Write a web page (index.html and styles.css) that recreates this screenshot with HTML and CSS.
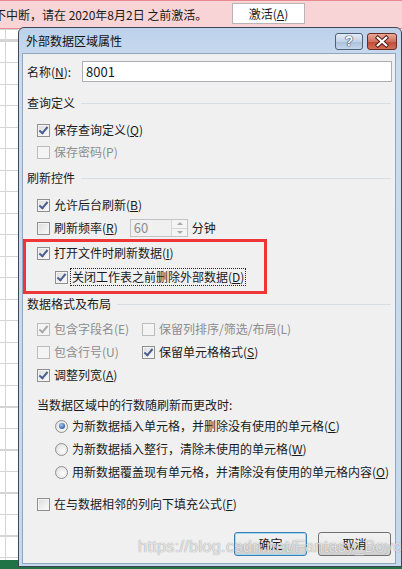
FILE: index.html
```html
<!DOCTYPE html>
<html lang="zh-CN">

<head>
    <meta charset="UTF-8">
    <title>外部数据区域属性</title>
    <link rel="stylesheet" href="styles.css">
</head>

<body>
    <!-- Activation notice -->
    <div class="notice">
        <span class="notice-text">不中断，请在 2020年8月2日 之前激活。</span>
        <span class="notice-btn">激活(<u>A</u>)</span>
    </div>

    <div class="desk">
        <div class="sheet"></div>

        <!-- Dialog -->
        <div class="dialog">
            <div class="titlebar">
                <span class="title">外部数据区域属性</span>
                <span class="tb-btn help">?</span>
                <span class="tb-btn close">
                    <svg viewBox="0 0 30 17" width="30" height="17">
                        <path d="M10.5 4.5 L19.5 12.5 M19.5 4.5 L10.5 12.5" stroke="#5a1a14" stroke-width="4.4" stroke-linecap="square"/>
                        <path d="M10.5 4.5 L19.5 12.5 M19.5 4.5 L10.5 12.5" stroke="#fff" stroke-width="2.4" stroke-linecap="square"/>
                    </svg>
                </span>
            </div>

            <div class="content">
                <div class="name-row">
                    <label class="name-label">名称(<u>N</u>):</label>
                    <div class="textbox">8001</div>
                </div>

                <div class="group g1"><span>查询定义</span></div>
                <div class="row r10"><span class="cb on"></span><span class="lbl">保存查询定义(<u>Q</u>)</span></div>
                <div class="row r4 off"><span class="cb"></span><span class="lbl">保存密码(P)</span></div>

                <div class="group g2"><span>刷新控件</span></div>
                <div class="row r10"><span class="cb on"></span><span class="lbl">允许后台刷新(<u>B</u>)</span></div>
                <div class="row r5">
                    <span class="cb"></span><span class="lbl">刷新频率(<u>R</u>)</span>
                    <div class="spin">
                        <span class="spin-val">60</span>
                        <span class="spin-btns"><i class="up"></i><i class="down"></i></span>
                    </div>
                    <span class="unit">分钟</span>
                </div>

                <div class="mark">
                    <div class="row"><span class="cb on"></span><span class="lbl">打开文件时刷新数据(<u>I</u>)</span></div>
                    <div class="row sub r6"><span class="cb on"></span><span class="lbl focus">关闭工作表之前删除外部数据(<u>D</u>)</span></div>
                </div>

                <div class="group g3"><span>数据格式及布局</span></div>
                <div class="row r8">
                    <div class="col off"><span class="cb on"></span><span class="lbl">包含字段名(E)</span></div>
                    <div class="col off"><span class="cb"></span><span class="lbl">保留列排序/筛选/布局(L)</span></div>
                </div>
                <div class="row r5">
                    <div class="col off"><span class="cb"></span><span class="lbl">包含行号(U)</span></div>
                    <div class="col"><span class="cb on"></span><span class="lbl">保留单元格格式(<u>S</u>)</span></div>
                </div>
                <div class="row r5"><span class="cb on"></span><span class="lbl">调整列宽(<u>A</u>)</span></div>

                <div class="note">当数据区域中的行数随刷新而更改时:</div>
                <div class="row sub r4"><span class="rd on"></span><span class="lbl">为新数据插入单元格，并删除没有使用的单元格(<u>C</u>)</span></div>
                <div class="row sub r5"><span class="rd"></span><span class="lbl">为新数据插入整行，清除未使用的单元格(<u>W</u>)</span></div>
                <div class="row sub r5"><span class="rd"></span><span class="lbl">用新数据覆盖现有单元格，并清除没有使用的单元格内容(<u>O</u>)</span></div>

                <div class="row r14"><span class="cb"></span><span class="lbl">在与数据相邻的列向下填充公式(<u>F</u>)</span></div>

                <div class="buttons">
                    <span class="btn default">确定</span>
                    <span class="btn">取消</span>
                </div>
            </div>
        </div>
    </div>

    <div class="watermark">https://blog.csdn.net/Fantasy_Boyce</div>
</body>

</html>
```

FILE: styles.css
```css
body {
    margin: 0;
    padding: 0;
    width: 402px;
    height: 569px;
    overflow: hidden;
    font-family: "Noto Sans CJK SC", "Microsoft YaHei", sans-serif;
    font-size: 12px;
    line-height: 16px;
    color: #1a1a1a;
    background: #fff;
}

u {
    text-decoration: underline;
    text-underline-offset: 1px;
}
/* Activation notice */

.notice {
    height: 27px;
    border-top: 1px solid #e68a8f;
    border-bottom: 1px solid #e68a8f;
    background: #f9d4d6;
    display: flex;
    align-items: center;
    overflow: hidden;
    white-space: nowrap;
}

.notice-text {
    margin-left: -6px;
    width: 238px;
    flex-shrink: 0;
}

.notice-btn {
    width: 71px;
    height: 19px;
    border: 1px solid #b9b3b4;
    background: #fff;
    text-align: center;
    line-height: 19px;
    margin-top: -3px;
}
/* Desk behind the dialog */

.desk {
    display: flex;
    height: 540px;
    background: linear-gradient(to bottom, #fff 530px, #217346 530px);
}

.sheet {
    width: 18px;
    flex-shrink: 0;
    background:
        linear-gradient(to bottom, transparent 530px, #217346 530px),
        linear-gradient(to right, transparent 5px, #d4d4d4 5px, #d4d4d4 6px, transparent 6px),
        repeating-linear-gradient(to bottom, #d4d4d4 0, #d4d4d4 1px, transparent 1px, transparent 21.5px) 0 11px / 100% 100%,
        #fff;
    border-top: 1px solid #d4d4d4;
    box-sizing: border-box;
}
/* Dialog */

.dialog {
    width: 384px;
    height: 540px;
    margin-top: -2px;
    box-sizing: border-box;
    border: 1px solid #3d4655;
    border-radius: 6px 6px 0 0;
    background: linear-gradient(to bottom, #bcd1ea, #cbdcf0 40px, #c6d8ee);
    padding: 0 5px 2px 3px;
    display: flex;
    flex-direction: column;
    flex-shrink: 0;
}

.titlebar {
    height: 25px;
    display: flex;
    align-items: center;
}

.title {
    flex: 1;
    padding-left: 4px;
    margin-top: 1px;
    color: #111;
}

.tb-btn {
    height: 15px;
    border: 1px solid #4e5f78;
    border-radius: 3px;
    margin-top: 1px;
    display: flex;
    align-items: center;
    justify-content: center;
}

.help {
    width: 26px;
    margin-right: 4px;
    background: linear-gradient(to bottom, #e4ecf6, #c2d2e6 50%, #aabfd9 51%, #c4d6ec);
    color: #fff;
    font-family: "Liberation Sans", sans-serif;
    font-weight: bold;
    font-size: 14px;
    text-shadow: 0 0 1px #1f3350, 0 0 1px #1f3350, 0 0 1px #1f3350;
}

.close {
    width: 28px;
    margin-right: -1px;
    background: linear-gradient(to bottom, #e9a99c, #d0715f 50%, #c04a32 51%, #d46f57);
    border-color: #6b2a20;
}

.content {
    flex: 1;
    border: 1px solid #93a6bf;
    background: #f0f0f0;
    padding: 7px 3px 0 4px;
}

.name-row {
    display: flex;
    align-items: center;
    height: 21px;
}

.name-label {
    width: 55px;
}

.textbox {
    flex: 1;
    height: 19px;
    border: 1px solid #abadb3;
    background: #fff;
    padding-left: 3px;
    font-size: 13px;
    line-height: 19px;
}
/* Group headers */

.group {
    height: 16px;
    display: flex;
    align-items: center;
    color: #1a1a1a;
}

.group::after {
    content: "";
    flex: 1;
    height: 1px;
    background: #d5dfe5;
    margin-left: 6px;
    margin-right: 1px;
}

.g1 { margin-top: 13px; }
.g2 { margin-top: 9px; }
.g3 { margin-top: 2px; }
/* Rows */

.row {
    height: 18px;
    display: flex;
    align-items: center;
    padding-left: 10px;
    white-space: nowrap;
}

.row.sub {
    padding-left: 28px;
}

.r4 { margin-top: 4px; }
.r5 { margin-top: 5px; }
.r6 { margin-top: 6px; }
.r8 { margin-top: 8px; }
.r10 { margin-top: 10px; }
.r14 { margin-top: 14px; }

.col {
    display: flex;
    align-items: center;
    width: 105px;
}

.lbl {
    margin-left: 4px;
}

.off .lbl {
    color: #8d8d8d;
}

.cb {
    width: 11px;
    height: 11px;
    border: 1px solid #8e8f8f;
    background: linear-gradient(135deg, #dcdcdc, #fbfbfb);
    box-shadow: inset 0 0 0 1px #f4f4f4;
    flex-shrink: 0;
    position: relative;
}

.cb.on::after {
    content: "";
    position: absolute;
    left: 3px;
    top: 0px;
    width: 3px;
    height: 7px;
    border-right: 2px solid #4a5f8f;
    border-bottom: 2px solid #4a5f8f;
    transform: rotate(40deg);
}

.off .cb {
    border-color: #bcbcbc;
    background: #f4f4f4;
}

.off .cb.on::after {
    border-color: #a9a9a9;
}

.rd {
    width: 11px;
    height: 11px;
    border: 1px solid #8e8f8f;
    border-radius: 50%;
    background: radial-gradient(circle at 60% 60%, #fdfdfd, #dadada);
    flex-shrink: 0;
    position: relative;
}

.rd.on::after {
    content: "";
    position: absolute;
    left: 2.5px;
    top: 2.5px;
    width: 6px;
    height: 6px;
    border-radius: 50%;
    background: radial-gradient(circle at 40% 35%, #a9c9f2, #2f5fa8 70%);
}

.focus {
    outline: 1px dotted #222;
    outline-offset: 0;
    padding: 0 1px;
    margin-left: 3px;
}
/* Refresh rate spinner */

.spin {
    margin-left: 12px;
    width: 56px;
    height: 16px;
    border: 1px solid #c3c3c3;
    background: #f0f0f0;
    display: flex;
    align-items: center;
}

.spin-val {
    flex: 1;
    padding-left: 3px;
    color: #8d8d8d;
    font-size: 13px;
}

.spin-btns {
    width: 15px;
    height: 16px;
    display: flex;
    flex-direction: column;
    border-left: 1px solid #d6d6d6;
}

.spin-btns i {
    flex: 1;
    position: relative;
    background: #f4f4f4;
}

.spin-btns i + i {
    border-top: 1px solid #d6d6d6;
}

.spin-btns i::after {
    content: "";
    position: absolute;
    left: 5px;
    top: 2px;
    border-left: 3px solid transparent;
    border-right: 3px solid transparent;
}

.spin-btns .up::after {
    border-bottom: 3px solid #a8a8a8;
}

.spin-btns .down::after {
    border-top: 3px solid #a8a8a8;
}

.unit {
    margin-left: 4px;
    color: #1a1a1a;
}
/* Red annotation box */

.mark {
    margin: 2px 0 0 -4px;
    width: 244px;
    padding: 5px 0 8px 4px;
    box-sizing: border-box;
    box-shadow: inset 0 0 0 3px #ee3537;
}

.note {
    margin-top: 13px;
    height: 16px;
    padding-left: 10px;
}
/* Buttons */

.buttons {
    margin-top: 19px;
    display: flex;
    justify-content: flex-end;
    gap: 11px;
    padding-right: 1px;
}

.btn {
    width: 71px;
    height: 22px;
    border: 1px solid #707070;
    border-radius: 3px;
    background: linear-gradient(to bottom, #f2f2f2, #ebebeb 50%, #dddddd 51%, #cfcfcf);
    text-align: center;
    line-height: 22px;
}

.btn.default {
    border-color: #3c7fb1;
    box-shadow: inset 0 0 0 1px #9fd8f4;
}
/* Watermark */

.watermark {
    position: absolute;
    left: 138px;
    top: 536px;
    font-family: "Liberation Sans", Arial, sans-serif;
    font-size: 16.5px;
    line-height: 20px;
    color: rgba(255, 255, 255, 0.75);
    text-shadow: 0 0 1px rgba(110, 110, 110, 0.9);
    letter-spacing: 0.2px;
}
```
